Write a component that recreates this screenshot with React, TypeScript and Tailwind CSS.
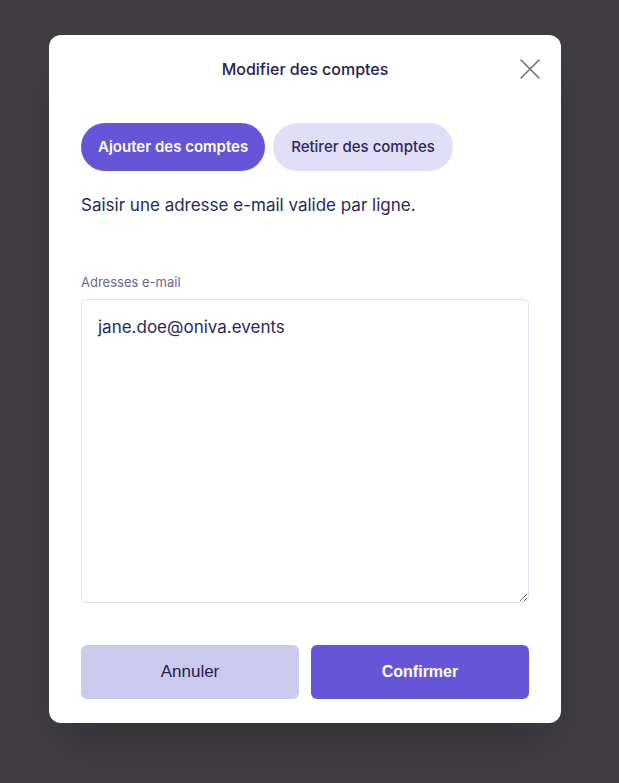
export default function App() {
  return (
    <div className="min-h-[783px] w-full bg-[#403e42] pt-[35px]" style={{ fontFamily: "Inter, 'Noto Sans', sans-serif" }}>
      <div className="ml-[49px] w-[512px] rounded-xl bg-white px-8 pb-6 shadow-2xl">
        <div className="relative flex h-[68px] items-center justify-center">
          <h2 className="text-[16px] font-medium text-[#25224d]">Modifier des comptes</h2>
          <button className="absolute right-[-12px] top-[23px] text-[#6f6c85]" aria-label="Fermer">
            <svg width="22" height="22" viewBox="0 0 22 22" fill="none" stroke="currentColor" strokeWidth="1.6" strokeLinecap="round">
              <path d="M2 2 L20 20 M20 2 L2 20" />
            </svg>
          </button>
        </div>

        <div className="mt-5 flex gap-2">
          <button className="h-12 rounded-full bg-[#6655d6] px-[17px] text-[15px] font-semibold text-white">
            Ajouter des comptes
          </button>
          <button className="h-12 rounded-full bg-[#e1dff8] px-[18px] text-[15px] font-medium text-[#2b2857]">
            Retirer des comptes
          </button>
        </div>

        <p className="mt-[22px] text-[17px] leading-6 text-[#2b2857]">
          Saisir une adresse e-mail valide par ligne.
        </p>

        <label className="mt-14 block text-[13px] leading-[18px] text-[#6a6788]">Adresses e-mail</label>
        <textarea
          className="mt-[8px] block h-[304px] w-full resize-y rounded-md border border-[#e2e0ec] px-4 py-[15px] text-[17px] leading-6 text-[#2b2857] outline-none"
          defaultValue="jane.doe@oniva.events"
        />

        <div className="mt-[42px] grid grid-cols-2 gap-3" style={{ fontFamily: "'Liberation Sans', Arial, sans-serif" }}>
          <button className="h-[54px] rounded-md bg-[#cbc9ee] text-[17px] text-[#25224d]">Annuler</button>
          <button className="h-[54px] rounded-md bg-[#6655d6] text-[16px] font-bold text-white">Confirmer</button>
        </div>
      </div>
    </div>
  );
}
